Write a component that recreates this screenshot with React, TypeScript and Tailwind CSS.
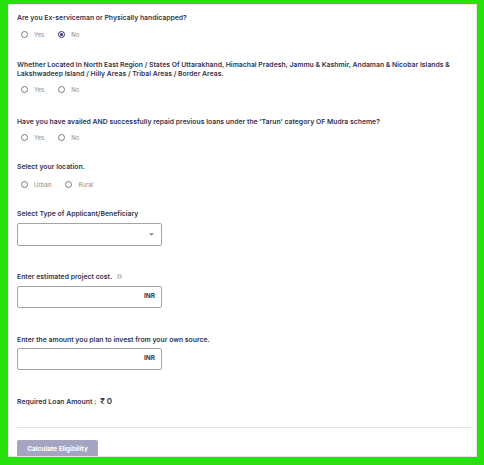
import { useState } from 'react'

const FONT = { fontFamily: 'Inter, "Noto Sans", Arial, sans-serif' }

type RadioProps = { options: string[]; value: string; onChange: (v: string) => void }

function RadioRow({ options, value, onChange }: RadioProps) {
  return (
    <div className="flex h-[9px] items-center pl-[4px]">
      {options.map(o => (
        <label key={o} className="mr-[14px] flex cursor-pointer items-center" onClick={() => onChange(o)}>
          <span
            className={
              value === o
                ? 'flex h-[7px] w-[7px] items-center justify-center rounded-full border border-[#2c2c6e]'
                : 'flex h-[7px] w-[7px] items-center justify-center rounded-full border border-[#7a7a7a]'
            }
          >
            {value === o && <span className="h-[3px] w-[3px] rounded-full bg-[#2c2c6e]" />}
          </span>
          <span className="ml-[6px] text-[6px] leading-[9px] text-[#8a8a8a]">{o}</span>
        </label>
      ))}
    </div>
  )
}

function Label({ children, className = '' }: { children: React.ReactNode; className?: string }) {
  return <div className={'text-[6.85px] font-semibold leading-[9px] text-[#33334d] ' + className}>{children}</div>
}

function InrInput({ className = '' }: { className?: string }) {
  return (
    <div className={'flex h-[22px] w-[145px] items-center justify-end rounded-[2px] border border-[#a3a3a3] pr-[6px] ' + className}>
      <span className="text-[6.5px] font-bold text-[#3a3a4a]">INR</span>
    </div>
  )
}

export default function App() {
  const [ex, setEx] = useState('No')
  const [ne, setNe] = useState('')
  const [tarun, setTarun] = useState('')
  const [loc, setLoc] = useState('')

  return (
    <div className="h-[465px] w-[484px] bg-[#27e10c] pb-[8px] pl-[8px] pr-[7px] pt-[4px]" style={FONT}>
      <div className="h-full overflow-hidden border border-[#e3e3e3] bg-white pl-[8px] pr-[5px] pt-[8px]">
        <Label>Are you Ex-serviceman or Physically handicapped?</Label>
        <div className="mt-[8px]">
          <RadioRow options={['Yes', 'No']} value={ex} onChange={setEx} />
        </div>

        <Label className="mt-[21px]">
          Whether Located In North East Region / States Of Uttarakhand, Himachal Pradesh, Jammu &amp; Kashmir, Andaman &amp; Nicobar Islands &amp;
          <br />
          Lakshwadeep Island / Hilly Areas / Tribal Areas / Border Areas.
        </Label>
        <div className="mt-[7px]">
          <RadioRow options={['Yes', 'No']} value={ne} onChange={setNe} />
        </div>

        <Label className="mt-[23px]">
          Have you have availed AND successfully repaid previous loans under the 'Tarun' category OF Mudra scheme?
        </Label>
        <div className="mt-[7px]">
          <RadioRow options={['Yes', 'No']} value={tarun} onChange={setTarun} />
        </div>

        <Label className="mt-[20px]">Select your location.</Label>
        <div className="mt-[9px]">
          <RadioRow options={['Urban', 'Rural']} value={loc} onChange={setLoc} />
        </div>

        <Label className="mt-[20px]">Select Type of Applicant/Beneficiary</Label>
        <div className="mt-[5px] flex h-[23px] w-[145px] items-center justify-end rounded-[2px] border border-[#a3a3a3] pr-[7px]">
          <svg width="5" height="3" viewBox="0 0 5 3">
            <path d="M0 0 L5 0 L2.5 3 Z" fill="#9a9a9a" />
          </svg>
        </div>

        <Label className="mt-[26px] flex items-center">
          Enter estimated project cost.
          <svg className="ml-[5px]" width="5" height="5" viewBox="0 0 10 10">
            <circle cx="5" cy="5" r="5" fill="#c9c9c9" />
            <rect x="4.2" y="4.2" width="1.6" height="3.6" fill="#fff" />
            <circle cx="5" cy="2.8" r="0.9" fill="#fff" />
          </svg>
        </Label>
        <InrInput className="mt-[5px]" />

        <Label className="mt-[27px]">Enter the amount you plan to invest from your own source.</Label>
        <InrInput className="mt-[4px]" />

        <div className="mt-[27px] flex items-center text-[6.85px] font-semibold leading-[9px] text-[#33334d]">
          Required Loan Amount :
          <span className="ml-[4px] text-[8px]">₹ 0</span>
        </div>

        <div className="mt-[21px] h-px bg-[#e2e2e2]" />

        <button className="mt-[12px] flex h-[20px] w-[81px] items-center justify-center rounded-[2px] bg-[#a5a4c3] text-[6.5px] font-bold text-white">
          Calculate Eligibility
        </button>
      </div>
    </div>
  )
}
